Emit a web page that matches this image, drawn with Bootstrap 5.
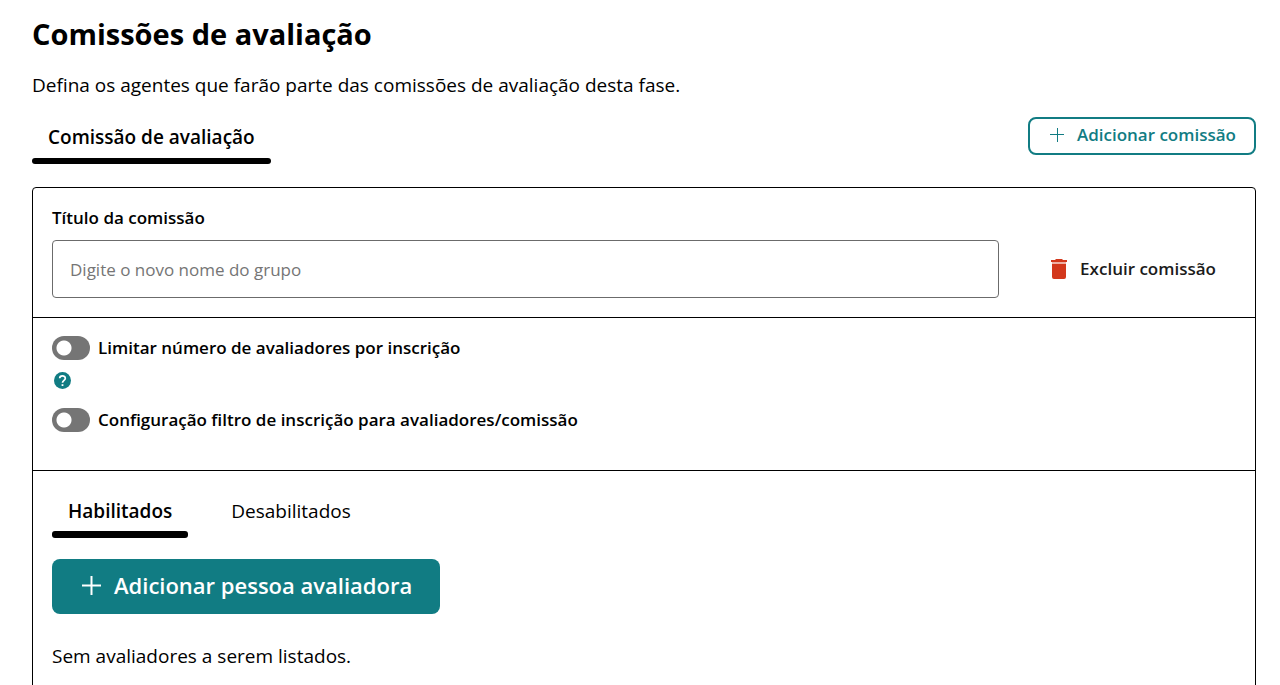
<!DOCTYPE html>
<html lang="pt-BR">
<head>
<meta charset="utf-8">
<meta name="viewport" content="width=device-width, initial-scale=1">
<title>Comissões de avaliação</title>
<link href="https://cdn.jsdelivr.net/npm/bootstrap@5.3.0/dist/css/bootstrap.min.css" rel="stylesheet">
<style>
:root{--teal:#117c83}
body{font-family:"Open Sans","Noto Sans",sans-serif;color:#000;font-size:17px;line-height:24px;background:#fff}
.page{padding:14px 24px 0 32px}
h1{font-size:29px;line-height:40px;font-weight:700}
.intro,.empty-note{font-size:19px;line-height:24px}
.intro{margin:19px 0 20px}
.empty-note{margin:30px 0 60px}
.tab-link{background:none;border:0;color:#000;padding:8px 16px 15px;font-size:19px;line-height:24px;position:relative}
.tab-link.active{font-weight:600}
.tab-link.active::after{content:"";position:absolute;left:0;right:0;bottom:0;height:6px;border-radius:3px;background:#000}
.inner-tabs{gap:27px}
.inner-tabs .tab-link{padding:10px 16px 15px}
.inner-tabs .tab-link.active::after{height:7px}
.add-group{border:2px solid var(--teal);border-radius:8px;color:var(--teal);font-size:17px;font-weight:600;padding:4px 18px 6px 20px;line-height:24px;gap:13px}
.add-group:hover{background:var(--teal);color:#fff}
.panel{border:1px solid #000;border-radius:4px;margin-top:23px}
.panel section{padding:18px 19px 19px}
.panel section + section{border-top:1px solid #000}
.panel .options{padding-bottom:38px}
.title-label{margin-bottom:10px;font-weight:600}
.title-field{height:58px;border:1px solid #6b6b6b;border-radius:4px;padding:0 17px;font-size:17px}
.title-field::placeholder{color:#757575}
.remove{background:none;border:0;padding:0 20px 0 0;margin-left:51px;font-weight:600;color:#1b1b1b;gap:12px}
.switch-row{display:flex;align-items:center;min-height:24px;padding:0;margin:0;font-weight:600;gap:8px}
.switch-row .form-check-input{width:38px;height:24px;margin:0;float:none;border:0;background-color:#757575;background-image:radial-gradient(circle,#fff 7px,transparent 8px);background-size:24px 24px;background-repeat:no-repeat;background-position:left center}
.switch-row .form-check-input:checked{background-color:var(--teal);background-position:right center}
.help{width:17px;height:17px;border:0;padding:0;margin:12px 2px 19px;background:none;color:var(--teal)}
.add-person{background:var(--teal);color:#fff;border:0;border-radius:8px;font-size:22px;line-height:31px;font-weight:600;padding:11px 28px 13px 30px;margin-top:21px;gap:13px}
.add-person:hover{background:#0c656b;color:#fff}
</style>
</head>
<body>
<main class="page">
  <h1 class="mb-0">Comissões de avaliação</h1>
  <p class="intro">Defina os agentes que farão parte das comissões de avaliação desta fase.</p>
  <div class="d-flex justify-content-between align-items-start">
    <div class="d-flex" role="tablist"><button class="tab-link active" role="tab" aria-selected="true">Comissão de avaliação</button></div>
    <button class="btn add-group d-flex align-items-center"><svg width="14" height="14" viewBox="0 0 14 14" aria-hidden="true"><path d="M7.500 0v14M0 6.500h14" stroke="currentColor"/></svg>Adicionar comissão</button>
  </div>
  <div class="panel">
    <section>
      <label class="title-label d-block" for="title">Título da comissão</label>
      <div class="d-flex align-items-center">
        <input class="form-control title-field" id="title" type="text" placeholder="Digite o novo nome do grupo">
        <button class="remove text-nowrap d-flex align-items-center"><svg width="18" height="20" viewBox="1 0 18 20" aria-hidden="true"><path fill="#d3381c" d="M2 1h4l1-1h6l1 1h4v2H2zM3 5h14v13q0 2-2 2H5q-2 0-2-2z"/><path fill="#eeb0a4" d="M3 3h14v2H3z"/></svg>Excluir comissão</button>
      </div>
    </section>
    <section class="options">
      <div class="form-switch switch-row"><input class="form-check-input" type="checkbox" role="switch" id="limit"><label for="limit">Limitar número de avaliadores por inscrição</label></div>
      <button class="help d-block" aria-label="Ajuda"><svg class="d-block" width="17" height="17" viewBox="0 0 17 17" aria-hidden="true"><circle cx="8.500" cy="8.500" r="8.500" fill="currentColor"/><path d="M5.700 6.300C5.700 3.200 11.300 3.100 11.300 6.300C11.300 8.400 8.500 8.300 8.500 10.800" fill="none" stroke="#fff" stroke-width="1.700"/><path d="M7.600 12.200h1.800v1.800H7.600z" fill="#fff"/></svg></button>
      <div class="form-switch switch-row"><input class="form-check-input" type="checkbox" role="switch" id="filter"><label for="filter">Configuração filtro de inscrição para avaliadores/comissão</label></div>
    </section>
    <section>
      <div class="d-flex inner-tabs" role="tablist"><button class="tab-link active" role="tab" aria-selected="true">Habilitados</button><button class="tab-link" role="tab" aria-selected="false">Desabilitados</button></div>
      <button class="btn add-person d-flex align-items-center"><svg width="19" height="19" viewBox="0 0 19 19" aria-hidden="true"><path d="M9.500 0v19M0 9.500h19" stroke="currentColor" stroke-width="2"/></svg>Adicionar pessoa avaliadora</button>
      <p class="empty-note">Sem avaliadores a serem listados.</p>
    </section>
  </div>
</main>
<script src="https://cdn.jsdelivr.net/npm/bootstrap@5.3.0/dist/js/bootstrap.bundle.min.js"></script>
</body>
</html>
